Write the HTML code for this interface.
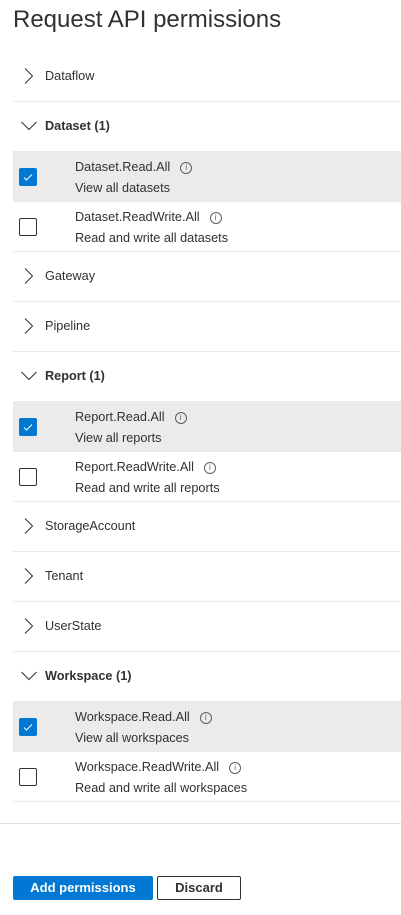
<!DOCTYPE html>
<html><head><style>
body{margin:0;width:401px;height:915px;background:#fff;font-family:"Liberation Sans",sans-serif;color:#323130;position:relative;overflow:hidden}
h1{position:absolute;left:13px;top:6px;margin:0;font-size:24px;font-weight:normal;color:#323130}
.row{position:absolute;left:13px;width:388px;height:49px;border-bottom:1px solid #edebe9}
.sel{background:#edebe9}
.chev{position:absolute;left:8px;top:16px;width:16px;height:16px}
.lbl{position:absolute;left:32px;top:17px;font-size:12.7px}
.b{font-weight:bold}
.cb{position:absolute;left:6px;top:16px;width:16px;height:16px;border:1px solid #323130;border-radius:2px;background:#fff}
.cb.on{background:#0078d4;border-color:#0078d4}
.n{position:absolute;left:62px;top:8px;font-size:12.7px}
.d{position:absolute;left:62px;top:29px;font-size:12.7px}
.i{display:inline-block;width:10px;height:10px;border:1px solid #605e5c;border-radius:50%;font-size:8px;line-height:10px;text-align:center;color:#605e5c;margin-left:10px;vertical-align:1px}
.btn{position:absolute;top:876px;height:22px;font-size:13px;font-weight:bold;text-align:center;line-height:22px;border-radius:2px}
</style></head><body>
<h1>Request API permissions</h1>

<div class="row" style="top:52px"><svg class="chev" viewBox="0 0 16 16"><path d="M4 0.5l7.5 7.5-7.5 7.5" fill="none" stroke="#323130" stroke-width="1"/></svg><span class="lbl">Dataflow</span></div>
<div class="row" style="top:102px"><svg class="chev" viewBox="0 0 16 16"><path d="M0.5 4l7.5 7.5 7.5-7.5" fill="none" stroke="#323130" stroke-width="1"/></svg><span class="lbl b">Dataset (1)</span></div>
<div class="row sel" style="top:152px"><div class="cb on"><svg viewBox="0 0 16 16" width="16" height="16"><path d="M4 8.5l2.5 2.5 5.5-5.5" fill="none" stroke="#fff" stroke-width="1"/></svg></div><span class="n">Dataset.Read.All<span class="i">i</span></span><span class="d">View all datasets</span></div>
<div class="row" style="top:202px"><div class="cb"></div><span class="n">Dataset.ReadWrite.All<span class="i">i</span></span><span class="d">Read and write all datasets</span></div>
<div class="row" style="top:252px"><svg class="chev" viewBox="0 0 16 16"><path d="M4 0.5l7.5 7.5-7.5 7.5" fill="none" stroke="#323130" stroke-width="1"/></svg><span class="lbl">Gateway</span></div>
<div class="row" style="top:302px"><svg class="chev" viewBox="0 0 16 16"><path d="M4 0.5l7.5 7.5-7.5 7.5" fill="none" stroke="#323130" stroke-width="1"/></svg><span class="lbl">Pipeline</span></div>
<div class="row" style="top:352px"><svg class="chev" viewBox="0 0 16 16"><path d="M0.5 4l7.5 7.5 7.5-7.5" fill="none" stroke="#323130" stroke-width="1"/></svg><span class="lbl b">Report (1)</span></div>
<div class="row sel" style="top:402px"><div class="cb on"><svg viewBox="0 0 16 16" width="16" height="16"><path d="M4 8.5l2.5 2.5 5.5-5.5" fill="none" stroke="#fff" stroke-width="1"/></svg></div><span class="n">Report.Read.All<span class="i">i</span></span><span class="d">View all reports</span></div>
<div class="row" style="top:452px"><div class="cb"></div><span class="n">Report.ReadWrite.All<span class="i">i</span></span><span class="d">Read and write all reports</span></div>
<div class="row" style="top:502px"><svg class="chev" viewBox="0 0 16 16"><path d="M4 0.5l7.5 7.5-7.5 7.5" fill="none" stroke="#323130" stroke-width="1"/></svg><span class="lbl">StorageAccount</span></div>
<div class="row" style="top:552px"><svg class="chev" viewBox="0 0 16 16"><path d="M4 0.5l7.5 7.5-7.5 7.5" fill="none" stroke="#323130" stroke-width="1"/></svg><span class="lbl">Tenant</span></div>
<div class="row" style="top:602px"><svg class="chev" viewBox="0 0 16 16"><path d="M4 0.5l7.5 7.5-7.5 7.5" fill="none" stroke="#323130" stroke-width="1"/></svg><span class="lbl">UserState</span></div>
<div class="row" style="top:652px"><svg class="chev" viewBox="0 0 16 16"><path d="M0.5 4l7.5 7.5 7.5-7.5" fill="none" stroke="#323130" stroke-width="1"/></svg><span class="lbl b">Workspace (1)</span></div>
<div class="row sel" style="top:702px"><div class="cb on"><svg viewBox="0 0 16 16" width="16" height="16"><path d="M4 8.5l2.5 2.5 5.5-5.5" fill="none" stroke="#fff" stroke-width="1"/></svg></div><span class="n">Workspace.Read.All<span class="i">i</span></span><span class="d">View all workspaces</span></div>
<div class="row" style="top:752px"><div class="cb"></div><span class="n">Workspace.ReadWrite.All<span class="i">i</span></span><span class="d">Read and write all workspaces</span></div>

<div style="position:absolute;left:0;top:823px;width:401px;height:1px;background:#e1dfdd"></div>
<div class="btn" style="left:13px;width:140px;background:#0078d4;color:#fff;height:24px;line-height:24px">Add permissions</div>
<div class="btn" style="left:157px;width:82px;border:1px solid #323130;color:#323130">Discard</div>
</body></html>
